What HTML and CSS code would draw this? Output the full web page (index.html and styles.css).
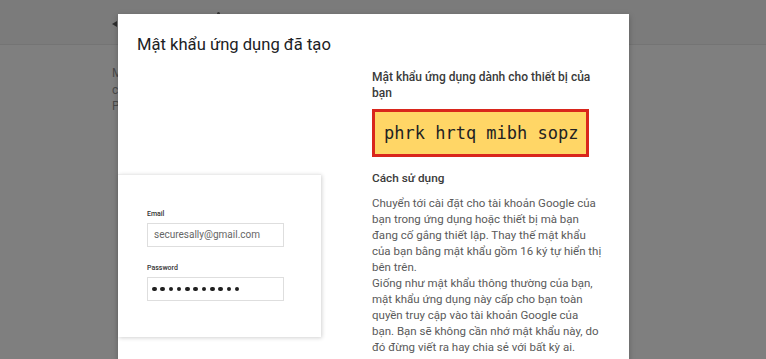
FILE: index.html
```html
<!DOCTYPE html>
<html lang="vi">
<head>
<meta charset="utf-8">
<link rel="stylesheet" href="styles.css">
</head>
<body>
<div class="page">
  <div class="topbar">
    <span class="back"></span>
    <span class="mark"></span>
  </div>
  <div class="content">
    <p class="bg-text">Mật khẩu ứng dụng giúp bạn đăng nhập vào Tài khoản Google<br>của bạn từ các ứng dụng trên thiết bị không hỗ trợ<br>Phương thức xác minh 2 bước.</p>
  </div>
</div>

<div class="modal">
  <h1 class="title">Mật khẩu ứng dụng đã tạo</h1>
  <div class="body">
    <div class="left">
      <div class="card">
        <div class="label">Email</div>
        <div class="input">securesally@gmail.com</div>
        <div class="label label-pw">Password</div>
        <div class="input input-pw">
          <span class="dot"></span><span class="dot"></span><span class="dot"></span><span class="dot"></span><span class="dot"></span><span class="dot"></span><span class="dot"></span><span class="dot"></span><span class="dot"></span><span class="dot"></span><span class="dot"></span>
        </div>
      </div>
    </div>
    <div class="right">
      <p class="heading">Mật khẩu ứng dụng dành cho thiết bị của bạn</p>
      <div class="code">phrk hrtq mibh sopz</div>
      <p class="sub">Cách sử dụng</p>
      <p class="para">Chuyển tới cài đặt cho tài khoản Google của bạn trong ứng dụng hoặc thiết bị mà bạn đang cố gắng thiết lập. Thay thế mật khẩu của bạn bằng mật khẩu gồm 16 ký tự hiển thị bên trên.<br>Giống như mật khẩu thông thường của bạn, mật khẩu ứng dụng này cấp cho bạn toàn quyền truy cập vào tài khoản Google của bạn. Bạn sẽ không cần nhớ mật khẩu này, do đó đừng viết ra hay chia sẻ với bất kỳ ai.</p>
    </div>
  </div>
</div>
</body>
</html>
```

FILE: styles.css
```css
* { box-sizing: border-box; }
html, body { margin: 0; padding: 0; }
body {
  width: 766px;
  height: 359px;
  overflow: hidden;
  background: #7f7f7f;
  font-family: Roboto, "Noto Sans", "Liberation Sans", sans-serif;
  position: relative;
}
.page { width: 100%; height: 100%; }
.topbar {
  height: 45px;
  background: #7b7b7b;
  border-bottom: 1px solid #747474;
  position: relative;
}
.back {
  position: absolute;
  left: 112px;
  top: 21px;
  width: 0; height: 0;
  border-top: 3px solid transparent;
  border-bottom: 3px solid transparent;
  border-right: 5px solid #2e2e2e;
}
.mark {
  position: absolute;
  left: 217px;
  top: 12px;
  width: 3px; height: 3px;
  background: #333;
  border-radius: 50%;
}
.content { padding: 20px 0 0 112px; }
.bg-text {
  margin: 0;
  font-size: 12px;
  line-height: 16.5px;
  color: #4a4a4a;
}

.modal {
  position: absolute;
  left: 118px;
  top: 14px;
  width: 511px;
  height: 380px;
  background: #fff;
  box-shadow: 0 2px 6px rgba(0,0,0,0.25);
  padding-top: 20px;
}
.title {
  margin: 0 0 13px 19px;
  font-size: 16.6px;
  line-height: 22px;
  font-weight: 400;
  color: #202124;
}
.body {
  display: flex;
}
.left {
  width: 254px;
  padding-top: 105px;
}
.card {
  width: 203px;
  height: 163px;
  background: #fff;
  border-top: 1px solid #ececec;
  box-shadow: 1px 1px 4px rgba(0,0,0,0.18);
  padding: 34px 0 0 29px;
}
.label {
  font-size: 7px;
  line-height: 10px;
  font-weight: 500;
  color: #333;
  margin-bottom: 4px;
}
.label-pw { margin-top: 16px; }
.input {
  width: 137px;
  height: 24px;
  border: 1px solid #dedede;
  font-size: 10px;
  line-height: 22px;
  color: #666;
  padding-left: 6px;
}
.input-pw {
  display: flex;
  align-items: center;
  gap: 3.8px;
  padding-left: 4px;
}
.dot {
  width: 4.5px;
  height: 4.5px;
  border-radius: 50%;
  background: #1f1f1f;
}
.right {
  width: 230px;
}
.heading {
  margin: 0;
  font-size: 12px;
  line-height: 16px;
  font-weight: 500;
  color: #3a3a3a;
}
.code {
  margin-top: 8px;
  width: 217px;
  height: 48px;
  background: #ffd666;
  border: 3px solid #d9261c;
  font-family: "DejaVu Sans Mono", "Liberation Mono", monospace;
  font-size: 17px;
  line-height: 42px;
  color: #222;
  padding-left: 9px;
  white-space: nowrap;
}
.sub {
  margin: 13px 0 0;
  font-size: 11.8px;
  line-height: 16px;
  font-weight: 500;
  color: #3a3a3a;
}
.para {
  margin: 9px 0 0;
  font-size: 11.5px;
  line-height: 16px;
  color: #5a5a5a;
}
```
